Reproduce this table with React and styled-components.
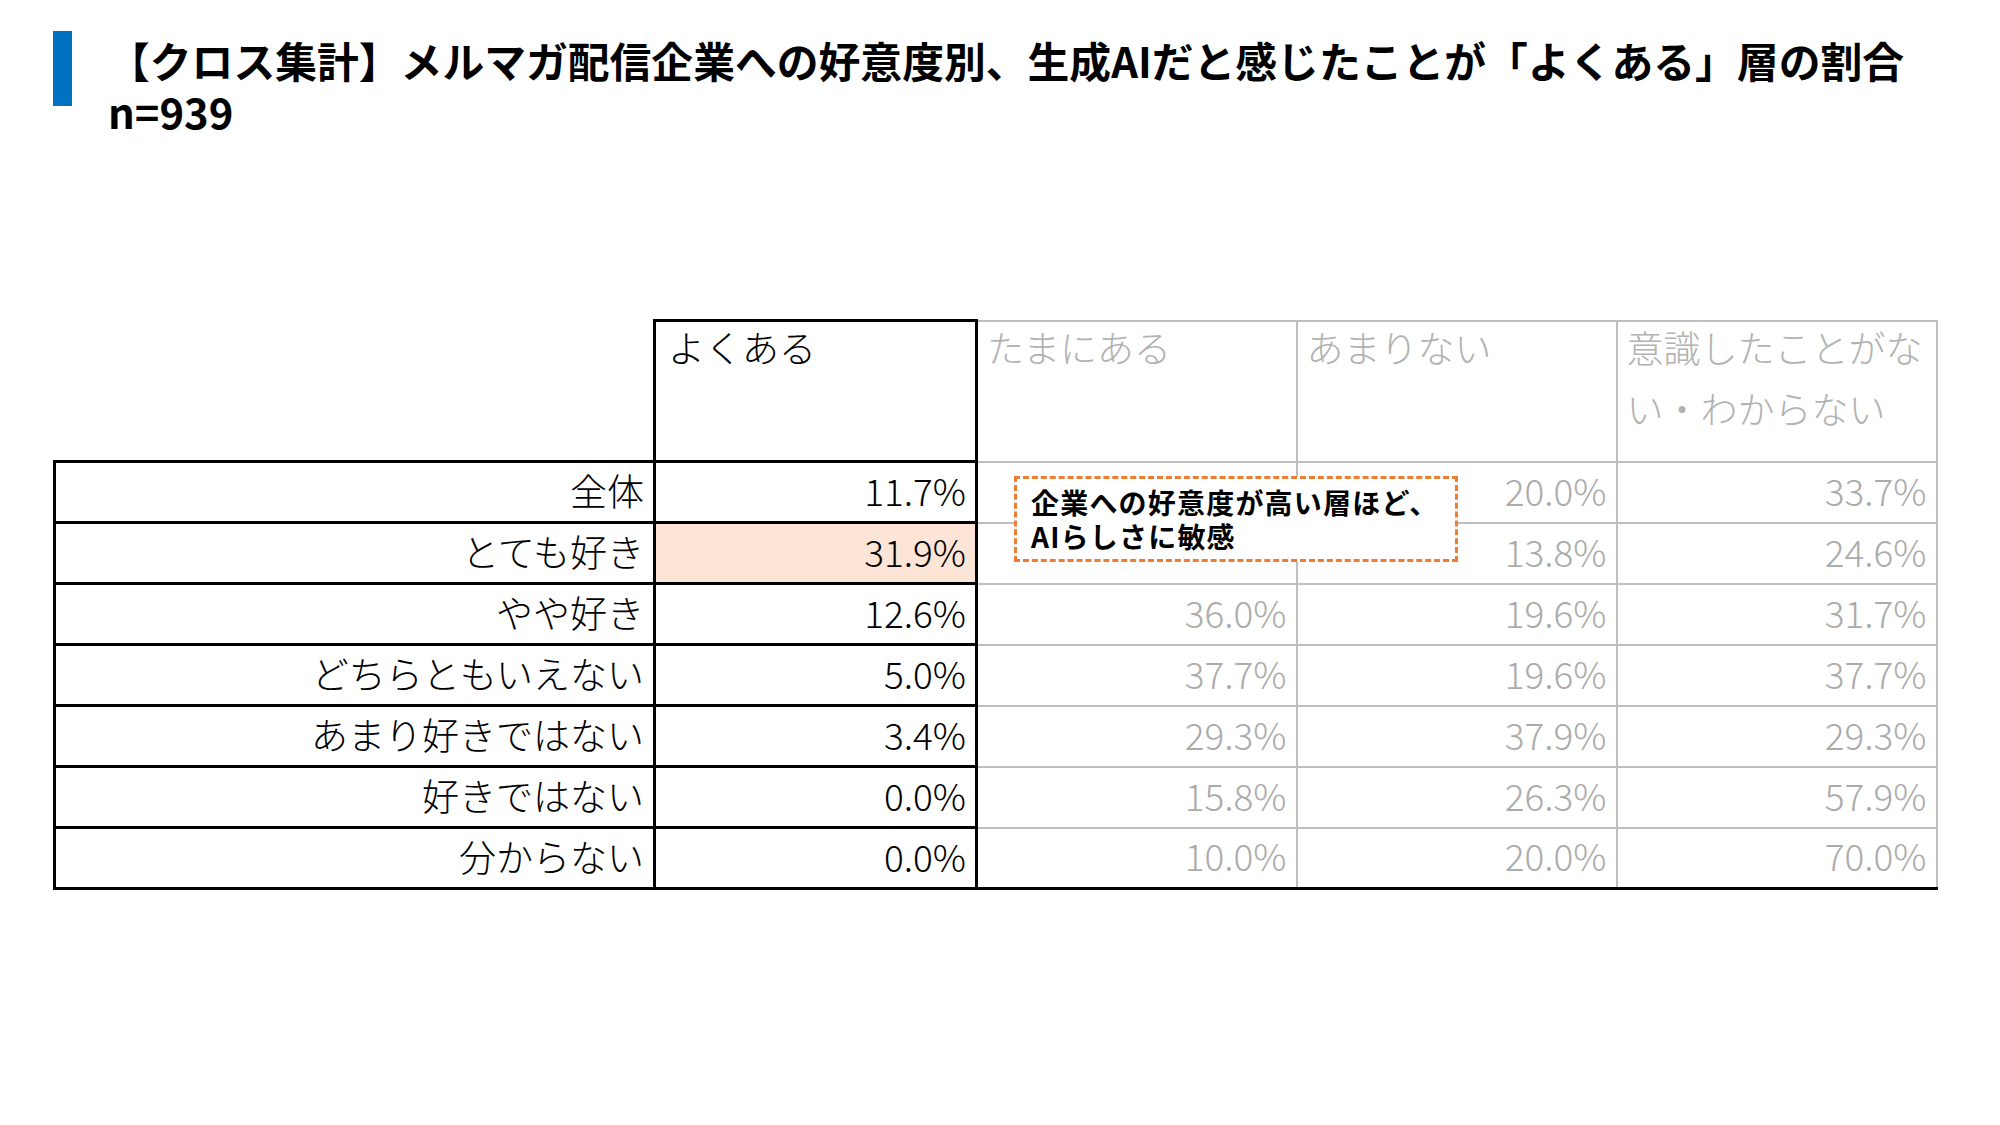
import React from "react";
import styled, { createGlobalStyle } from "styled-components";

const GlobalStyle = createGlobalStyle`
  html, body {
    margin: 0;
    padding: 0;
    background: #ffffff;
  }
  body {
    font-family: "Noto Sans CJK JP", "Noto Sans", sans-serif;
    color: #000000;
  }
`;

const Page = styled.div`
  width: 2000px;
  height: 1125px;
  box-sizing: border-box;
  padding: 31px 0 0 53px;
  overflow: hidden;
`;

const Header = styled.header`
  display: flex;
  align-items: flex-start;
`;

const Bar = styled.div`
  width: 19px;
  height: 75px;
  background: #0070c0;
  flex: none;
`;

const Title = styled.h1`
  margin: 4px 0 0 36px;
  font-size: 41.8px;
  font-weight: 700;
  line-height: 51px;
`;

const TableWrap = styled.div`
  position: relative;
  margin-top: 182px;
  width: 1884px;
`;

const Table = styled.table`
  border-collapse: collapse;
  table-layout: fixed;
  width: 1882px;
`;

const Col = styled.col`
  width: ${(p) => p.$w}px;
`;

const HeadRow = styled.tr`
  height: 141px;
`;

const BodyRow = styled.tr`
  height: 61px;
`;

const BlankHead = styled.th`
  border: none;
  padding: 0;
`;

const HeadCell = styled.th`
  padding: 0 6px 0 ${(p) => (p.$dark ? "12px" : "9px")};
  vertical-align: top;
  text-align: left;
  font-size: 37px;
  font-weight: 300;
  line-height: 61px;
  color: ${(p) => (p.$dark ? "#000000" : "#b2b2b2")};
  border: ${(p) => (p.$dark ? "3px solid #000000" : "2px solid #bfbfbf")};
  word-break: break-all;
`;

const HeadText = styled.div`
  margin-top: -5px;
`;

const Cell = styled.td`
  padding: 0 9px 4px 10px;
  text-align: right;
  vertical-align: middle;
  font-size: 37px;
  font-weight: 300;
  line-height: 1;
  white-space: nowrap;
  overflow: hidden;
  color: ${(p) => (p.$dark ? "#000000" : "#ababab")};
  background: ${(p) => (p.$hl ? "#fce4d6" : "transparent")};
  border: ${(p) => (p.$dark ? "3px solid #000000" : "2px solid #bfbfbf")};
  border-bottom: ${(p) =>
    p.$dark || p.$last ? "3px solid #000000" : "2px solid #bfbfbf"};
`;

const Callout = styled.div`
  position: absolute;
  left: 961px;
  top: 157px;
  width: 444px;
  height: 86px;
  box-sizing: border-box;
  padding: 6px 14px;
  background: #ffffff;
  border: 3px dashed #ed7d31;
  font-size: 28px;
  font-weight: 700;
  line-height: 34px;
  letter-spacing: 1.2px;
  white-space: nowrap;
`;

const columns = ["よくある", "たまにある", "あまりない", "意識したことがない・わからない"];
const widths = [600, 322, 320, 320, 320];

// the callout sits over the first two "たまにある" cells, which are left blank
const rows = [
  ["全体", "11.7%", "", "20.0%", "33.7%"],
  ["とても好き", "31.9%", "", "13.8%", "24.6%"],
  ["やや好き", "12.6%", "36.0%", "19.6%", "31.7%"],
  ["どちらともいえない", "5.0%", "37.7%", "19.6%", "37.7%"],
  ["あまり好きではない", "3.4%", "29.3%", "37.9%", "29.3%"],
  ["好きではない", "0.0%", "15.8%", "26.3%", "57.9%"],
  ["分からない", "0.0%", "10.0%", "20.0%", "70.0%"],
];

export default function App() {
  return (
    <Page>
      <GlobalStyle />
      <Header>
        <Bar />
        <Title>
          【クロス集計】メルマガ配信企業への好意度別、生成AIだと感じたことが「よくある」層の割合
          <br />
          n=939
        </Title>
      </Header>

      <TableWrap>
        <Table>
          <colgroup>
            {widths.map((w, i) => (
              <Col key={i} $w={w} />
            ))}
          </colgroup>
          <thead>
            <HeadRow>
              <BlankHead />
              {columns.map((col, i) => (
                <HeadCell key={col} $dark={i === 0}>
                  <HeadText>{col}</HeadText>
                </HeadCell>
              ))}
            </HeadRow>
          </thead>
          <tbody>
            {rows.map((row, r) => (
              <BodyRow key={row[0]}>
                {row.map((value, c) => (
                  <Cell
                    key={c}
                    $dark={c < 2}
                    $hl={r === 1 && c === 1}
                    $last={r === rows.length - 1}
                  >
                    {value}
                  </Cell>
                ))}
              </BodyRow>
            ))}
          </tbody>
        </Table>
        <Callout>
          企業への好意度が高い層ほど、
          <br />
          AIらしさに敏感
        </Callout>
      </TableWrap>
    </Page>
  );
}
